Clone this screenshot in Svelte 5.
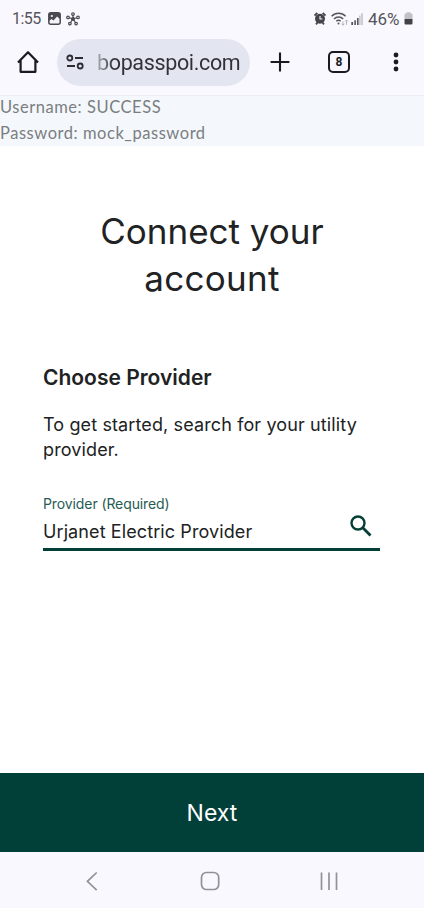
<script lang="ts">
  let username = $state('SUCCESS');
  let password = $state('mock_password');
  let provider = $state('Urjanet Electric Provider');
  let tabCount = $state(8);
</script>

<div class="phone">
  <div class="status-bar">
    <span class="clock">1:55</span>
    <svg class="photo" width="13" height="13" viewBox="0 0 13 13">
      <rect x="0.8" y="0.8" width="11.4" height="11.4" rx="2" fill="#f4f2fa" stroke="#4a4a50" stroke-width="1.5" />
      <path d="M1 1h11v6L9 4.5 5.5 8.5 3.5 7 1 9z" fill="#4a4a50" />
      <circle cx="3.8" cy="4" r="1.1" fill="#faf8ff" />
    </svg>
    <svg class="hub" width="14" height="14" viewBox="0 0 14 14" fill="none" stroke="#4a4a50" stroke-width="1.2">
      <path d="M7 7V3.3M7 7L3.2 5.8M7 7l3.8-1.2M7 7l-2.5 3.5M7 7l2.5 3.5" />
      <circle cx="7" cy="7" r="1.4" fill="#4a4a50" />
      <circle cx="7" cy="2.1" r="1.3" />
      <circle cx="2" cy="5.4" r="1.3" />
      <circle cx="12" cy="5.4" r="1.3" />
      <circle cx="3.9" cy="11.6" r="1.3" />
      <circle cx="10.1" cy="11.6" r="1.3" />
    </svg>
    <div class="status-right">
      <svg width="12" height="13" viewBox="0 0 12 13">
        <path d="M.5 3.5L3.3.8M11.5 3.5L8.7.8M2 12.3l1.5-1.8M10 12.3l-1.5-1.8" stroke="#444449" stroke-width="1.8" />
        <circle cx="6" cy="6.8" r="5" fill="#444449" />
        <path d="M6 4v3h2.4" fill="none" stroke="#faf8ff" stroke-width="1.1" />
      </svg>
      <svg class="wifi" width="18" height="14" viewBox="0 0 18 14" fill="none" stroke="#55555b" stroke-width="1.4">
        <path d="M.6 4.3a9.6 9.6 0 0 1 14 0M3 7a6.4 6.4 0 0 1 9.2 0M5.3 9.3a3.2 3.2 0 0 1 4.4 0" />
        <circle cx="7.5" cy="11.4" r="1" fill="#55555b" stroke="none" />
        <path d="M12 9.5v3.7M10.7 11.8l1.3 1.4 1.3-1.4M15.5 12.8V8M14.2 9.4l1.3-1.4 1.3 1.4" stroke="#aaa9b0" stroke-width="0.9" />
      </svg>
      <svg class="signal" width="12" height="12" viewBox="0 0 12 12">
        <path d="M.3 9h1.8v3H.3zM3.3 7.3h1.6V12H3.3zM6 5h1.6v7H6z" fill="#55555b" />
        <path d="M8.2 2.5h1.4V12H8.2zM10.3.2h1.5V12h-1.5z" fill="#c1c0c7" />
      </svg>
      <span class="charge">46%</span>
      <svg width="9" height="13" viewBox="0 0 9 13">
        <path d="M2.5 1.5V.3h4v1.2h1a1 1 0 0 1 1 1V7h-8V2.5a1 1 0 0 1 1-1z" fill="#c1c0c7" />
        <path d="M.5 7h8v4.3a1.2 1.2 0 0 1-1.2 1.2H1.7A1.2 1.2 0 0 1 .5 11.3z" fill="#414146" />
      </svg>
    </div>
  </div>

  <div class="browser-bar">
    <svg width="24" height="24" viewBox="0 0 24 24" fill="none" stroke="#1b1b1f" stroke-width="2.2">
      <path d="M2 12.5L12 2.2 22 12.5M4.6 10.2V21.8H19.4V10.2" stroke-linejoin="round" />
    </svg>
    <div class="address">
      <svg width="18" height="16" viewBox="0 0 18 16" fill="none" stroke="#2c2d32" stroke-width="1.8">
        <circle cx="3.8" cy="4" r="2.5" />
        <path d="M9 4h8M1 12h8" />
        <circle cx="14.2" cy="12" r="2.5" />
      </svg>
      <span class="url">bopasspoi.com</span>
    </div>
    <svg class="plus" width="20" height="20" viewBox="0 0 20 20" stroke="#1b1b1f" stroke-width="2.1">
      <path d="M10 .6v18.8M.6 10h18.8" />
    </svg>
    <div class="tabs">{tabCount}</div>
    <svg class="more" width="6" height="20" viewBox="0 0 6 20" fill="#1b1b1f">
      <circle cx="3" cy="3" r="2.4" />
      <circle cx="3" cy="10" r="2.4" />
      <circle cx="3" cy="17" r="2.4" />
    </svg>
  </div>

  <div class="credentials">
    <div>Username: {username}</div>
    <div>Password: {password}</div>
  </div>

  <main>
    <h1>Connect your<br /><span class="second">account</span></h1>
    <h2>Choose Provider</h2>
    <p>To get started, search for your utility<br />provider.</p>
    <div class="field">
      <div>
        <div class="label">Provider (Required)</div>
        <div class="value">{provider}</div>
      </div>
      <svg width="22" height="22" viewBox="0 0 22 22" fill="none" stroke="#043f37" stroke-width="2.4">
        <circle cx="8" cy="8" r="6.5" />
        <path d="M12.8 12.8L20.5 20.5" stroke-width="2.8" />
      </svg>
    </div>
  </main>

  <button class="next">Next</button>

  <div class="nav-bar">
    <svg width="12" height="20" viewBox="0 0 12 20"><path d="M10.7 1.5L1.4 10.3l9.3 8.9" /></svg>
    <svg class="overview" width="20" height="20" viewBox="0 0 20 20"><rect x="1.5" y="1.5" width="17.2" height="17" rx="5" /></svg>
    <svg class="recents" width="18" height="20" viewBox="0 0 18 20"><path d="M1.5 1.5v17.5M9 1.5v17.5M16.5 1.5v17.5" /></svg>
  </div>
</div>

<style>
  :global(body) {
    margin: 0;
    background: #fff;
  }

  .phone {
    display: flex;
    flex-direction: column;
    width: 424px;
    height: 908px;
    overflow: hidden;
    background: #fff;
    color: #202223;
    font-family: Inter, sans-serif;
  }

  .phone svg { flex-shrink: 0; display: block; }

  .status-bar {
    display: flex;
    align-items: center;
    box-sizing: border-box;
    height: 37px;
    padding: 0 11px 0 12px;
    background: #faf8ff;
    color: #55555b;
    font-family: Roboto, sans-serif;
  }

  .clock { width: 30px; font-size: 16px; letter-spacing: -0.5px; }
  .photo { margin-left: 6px; }
  .hub { margin-left: 5px; }

  .status-right {
    display: flex;
    align-items: center;
    margin-left: auto;
  }

  .wifi { margin-left: 5px; }
  .signal { margin-left: 2px; }
  .charge {
    width: 36px;
    margin-left: 5px;
    font-size: 17px;
    white-space: nowrap;
  }

  .browser-bar {
    display: flex;
    align-items: center;
    box-sizing: border-box;
    height: 59px;
    padding: 0 25px 8px 16px;
    background: #faf8ff;
    border-bottom: 1px solid #eeedf3;
  }

  .address {
    display: flex;
    align-items: center;
    box-sizing: border-box;
    width: 193px;
    height: 47px;
    margin-left: 17px;
    padding-left: 9px;
    border-radius: 24px;
    background: #e3e6f1;
  }

  .url {
    margin-left: 13px;
    font-family: Roboto, sans-serif;
    font-size: 21.5px;
    letter-spacing: -0.35px;
    white-space: nowrap;
    color: transparent;
    background: linear-gradient(90deg, #aeb1ba 0, #303137 16px);
    background-clip: text;
  }

  .plus { margin-left: 20px; }

  .tabs {
    box-sizing: border-box;
    width: 22px;
    height: 22px;
    margin-left: 38px;
    border: 2px solid #1b1b1f;
    border-radius: 5px;
    color: #1b1b1f;
    font: 700 12px/18px Roboto, sans-serif;
    text-align: center;
  }

  .more { margin-left: auto; }

  .credentials {
    box-sizing: border-box;
    height: 50px;
    background: #f4f8fc;
    color: #7b7e81;
    font-family: Lato, sans-serif;
    font-size: 16.5px;
    letter-spacing: 0.54px;
    line-height: 26px;
  }

  .credentials div:first-child { margin-top: -2px; }

  main {
    flex: 1;
    padding: 62px 43px 0;
  }

  h1 {
    margin: 0;
    font-size: 35px;
    font-weight: 400;
    line-height: 47px;
    text-align: center;
    white-space: nowrap;
  }

  .second { letter-spacing: 0.3px; }

  h2 {
    margin: 63px 0 0;
    font-size: 21px;
    font-weight: 600;
    line-height: 26px;
  }

  p {
    margin: 21px 0 0;
    font-size: 18px;
    letter-spacing: 0.12px;
    line-height: 25px;
    white-space: nowrap;
  }

  .field {
    display: flex;
    justify-content: space-between;
    box-sizing: border-box;
    height: 57px;
    margin: 32px 1px 0 0;
    padding-right: 8px;
    border-bottom: 3px solid #043f37;
  }

  .field svg { margin-top: 21px; }
  .label { color: #285b54; font-size: 14px; letter-spacing: -0.1px; line-height: 20px; }
  .value { margin-top: 5px; font-size: 18px; letter-spacing: 0.1px; line-height: 26px; }

  .next {
    height: 79px;
    padding: 0;
    border: 0;
    background: #004039;
    color: #fff;
    font-family: inherit;
    font-size: 23px;
  }

  .nav-bar {
    display: flex;
    box-sizing: border-box;
    height: 56px;
    padding: 19px 0 0 86px;
    background: #faf8ff;
  }

  .nav-bar svg { fill: none; stroke: #929198; stroke-width: 1.7; }
  .overview { margin-left: 102px; }
  .recents { margin-left: 100px; }
</style>
